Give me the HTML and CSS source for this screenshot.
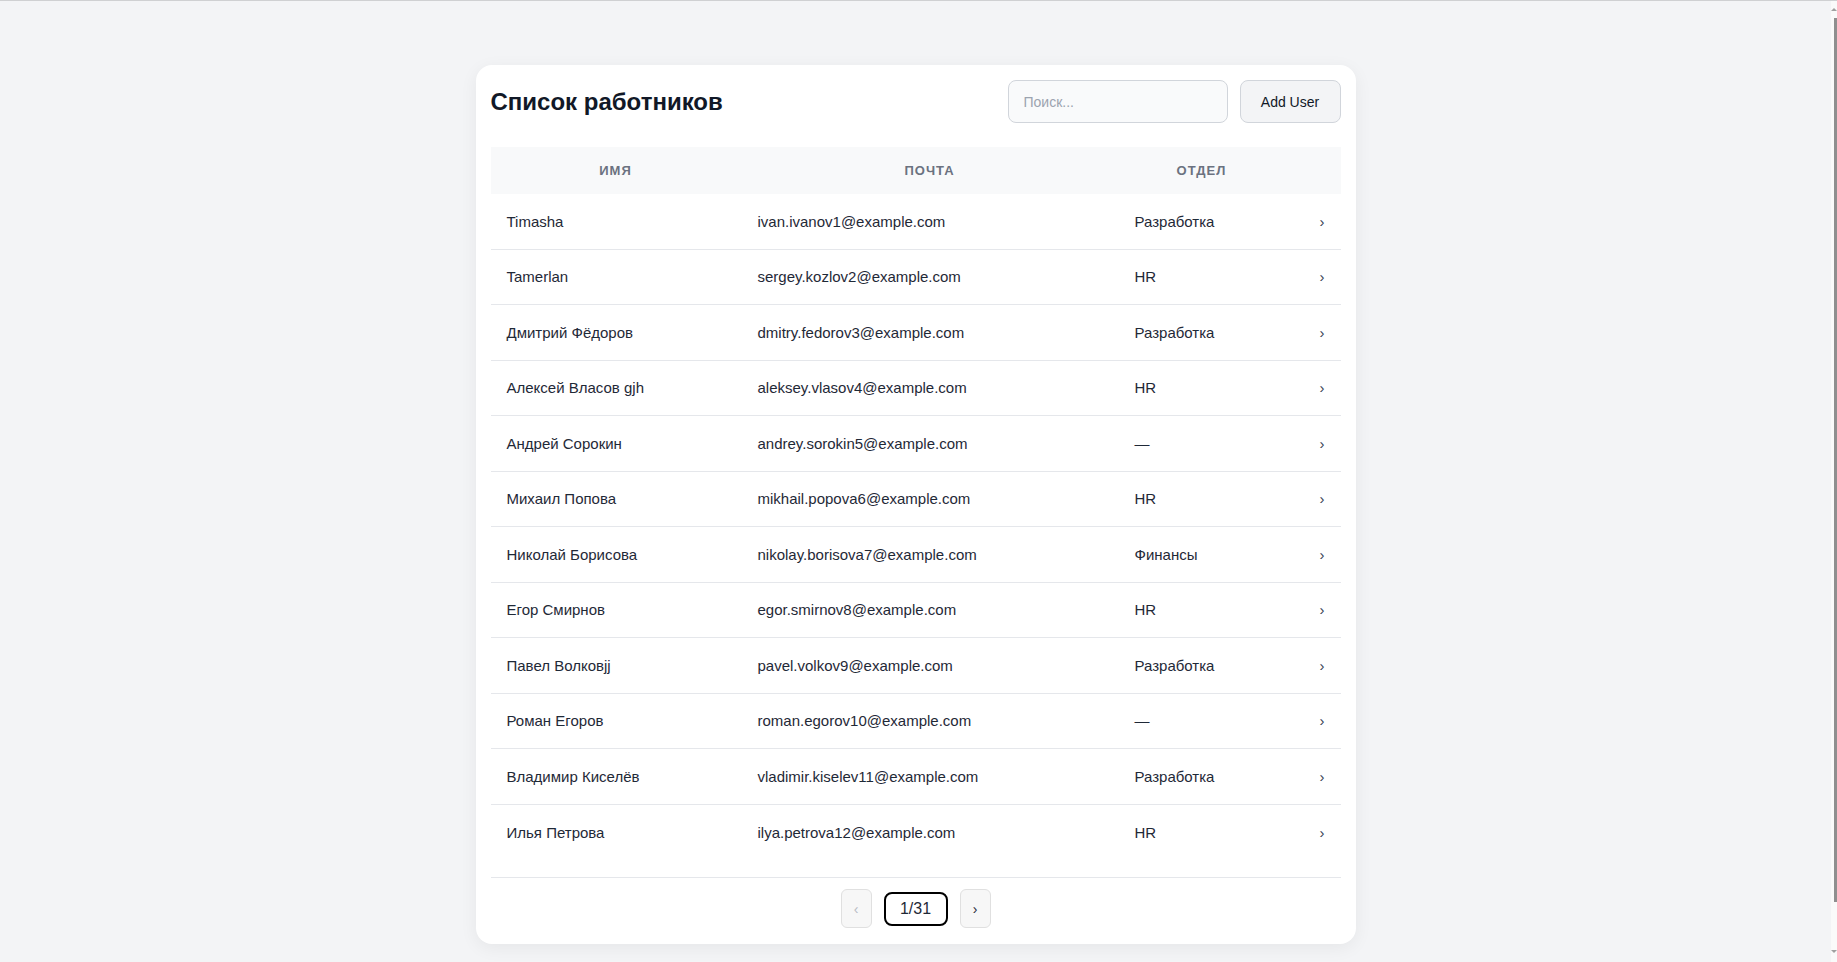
FILE: index.html
```html
<!DOCTYPE html>
<html lang="ru">
<head>
<meta charset="utf-8">
<title>Список работников</title>
<link rel="stylesheet" href="styles.css">
</head>
<body>
<main class="card">
  <div class="toolbar">
    <h1 class="title">Список работников</h1>
    <div class="actions">
      <input class="search" type="text" placeholder="Поиск...">
      <button class="add-btn" type="button">Add User</button>
    </div>
  </div>

  <div class="table">
    <div class="thead">
      <div class="th">Имя</div>
      <div class="th">Почта</div>
      <div class="th">Отдел</div>
      <div class="th"></div>
    </div>
    <div class="tbody">
      <div class="row"><span>Timasha</span><span>ivan.ivanov1@example.com</span><span>Разработка</span><span class="chev">›</span></div>
      <div class="row"><span>Tamerlan</span><span>sergey.kozlov2@example.com</span><span>HR</span><span class="chev">›</span></div>
      <div class="row"><span>Дмитрий Фёдоров</span><span>dmitry.fedorov3@example.com</span><span>Разработка</span><span class="chev">›</span></div>
      <div class="row"><span>Алексей Власов gjh</span><span>aleksey.vlasov4@example.com</span><span>HR</span><span class="chev">›</span></div>
      <div class="row"><span>Андрей Сорокин</span><span>andrey.sorokin5@example.com</span><span>—</span><span class="chev">›</span></div>
      <div class="row"><span>Михаил Попова</span><span>mikhail.popova6@example.com</span><span>HR</span><span class="chev">›</span></div>
      <div class="row"><span>Николай Борисова</span><span>nikolay.borisova7@example.com</span><span>Финансы</span><span class="chev">›</span></div>
      <div class="row"><span>Егор Смирнов</span><span>egor.smirnov8@example.com</span><span>HR</span><span class="chev">›</span></div>
      <div class="row"><span>Павел Волковјј</span><span>pavel.volkov9@example.com</span><span>Разработка</span><span class="chev">›</span></div>
      <div class="row"><span>Роман Егоров</span><span>roman.egorov10@example.com</span><span>—</span><span class="chev">›</span></div>
      <div class="row"><span>Владимир Киселёв</span><span>vladimir.kiselev11@example.com</span><span>Разработка</span><span class="chev">›</span></div>
      <div class="row"><span>Илья Петрова</span><span>ilya.petrova12@example.com</span><span>HR</span><span class="chev">›</span></div>
    </div>
  </div>

  <div class="pagination">
    <button class="page-btn disabled" type="button">‹</button>
    <div class="page-indicator">1/31</div>
    <button class="page-btn" type="button">›</button>
  </div>
</main>

<div class="scrollbar" aria-hidden="true">
  <span class="sb-arrow up"></span>
  <span class="sb-thumb"></span>
  <span class="sb-arrow down"></span>
</div>
</body>
</html>
```

FILE: styles.css
```css
html {
  background: #f3f4f6;
}

body {
  margin: 0;
  padding: 64px 6px 0 0;
  height: 962px;
  box-sizing: border-box;
  overflow: hidden;
  border-top: 1px solid #cfd0d2;
  font-family: "Liberation Sans", Arial, sans-serif;
  color: #1f2937;
  background: #f3f4f6;
}

.card {
  width: 880px;
  margin: 0 auto;
  box-sizing: border-box;
  padding: 15px 15px 16px;
  background: #ffffff;
  border-radius: 16px;
  box-shadow: 0 4px 18px rgba(0, 0, 0, 0.06);
}

.toolbar {
  display: flex;
  align-items: center;
  justify-content: space-between;
}

.title {
  margin: 0;
  font-size: 24px;
  font-weight: 700;
  color: #111827;
}

.actions {
  display: flex;
  gap: 12px;
}

.search {
  width: 220px;
  height: 43px;
  box-sizing: border-box;
  padding: 0 15px;
  border: 1px solid #d1d5db;
  border-radius: 8px;
  background: #f9fafb;
  font-family: "Liberation Sans", Arial, sans-serif;
  font-size: 14px;
  color: #111827;
  outline: none;
}
.search::placeholder {
  color: #9ca3af;
}

.add-btn {
  width: 101px;
  height: 43px;
  box-sizing: border-box;
  border: 1px solid #d1d5db;
  border-radius: 8px;
  background: #f3f4f6;
  font-family: "Liberation Sans", Arial, sans-serif;
  font-size: 14px;
  color: #111827;
  padding: 0;
}

.table {
  margin-top: 24px;
}

.thead {
  display: grid;
  grid-template-columns: 250px 378px 166px 1fr;
  align-items: center;
  height: 47px;
  background: #f8f9fa;
}

.th {
  text-align: center;
  font-size: 13px;
  font-weight: 700;
  letter-spacing: 1px;
  text-transform: uppercase;
  color: #6b7280;
}

.row {
  display: grid;
  grid-template-columns: 251px 377px 1fr 56px;
  align-items: center;
  height: 55.5px;
  box-sizing: border-box;
  border-bottom: 1px solid #e5e7eb;
  font-size: 15px;
  color: #1f2937;
}

.row > span {
  padding: 0 16px;
  white-space: nowrap;
}

.row:last-child {
  border-bottom: none;
}

.chev {
  text-align: right;
  font-size: 15px;
  color: #374151;
}

.pagination {
  display: flex;
  justify-content: center;
  align-items: center;
  gap: 12px;
  margin-top: 17px;
  padding-top: 11px;
  border-top: 1px solid #e5e7eb;
}

.page-btn {
  width: 31px;
  height: 39px;
  padding: 0;
  border: 1px solid #e0e0e0;
  border-radius: 6px;
  background: #f7f7f7;
  font-family: "Liberation Sans", Arial, sans-serif;
  font-size: 14px;
  color: #1f2937;
}

.page-btn.disabled {
  color: #b8bcc4;
}

.page-indicator {
  width: 64px;
  height: 34px;
  box-sizing: border-box;
  border: 2px solid #000000;
  border-radius: 8px;
  display: flex;
  align-items: center;
  justify-content: center;
  font-size: 16px;
  color: #1f2937;
}

/* overlay scrollbar drawn over the page edge */
.scrollbar {
  position: fixed;
  top: 1px;
  right: 0;
  bottom: 0;
  width: 6px;
  background: #fafafa;
  display: flex;
  flex-direction: column;
  align-items: flex-end;
}

.sb-arrow {
  width: 0;
  height: 0;
  margin: 7px 0 0;
  border-left: 3px solid transparent;
  border-right: 3px solid transparent;
}
.sb-arrow.up {
  border-bottom: 3px solid #a0a0a0;
}
.sb-arrow.down {
  margin: auto 0 9px;
  border-top: 3px solid #a0a0a0;
}

.sb-thumb {
  width: 3px;
  height: 884px;
  margin-top: 7px;
  background: #8f8f8f;
}
```
